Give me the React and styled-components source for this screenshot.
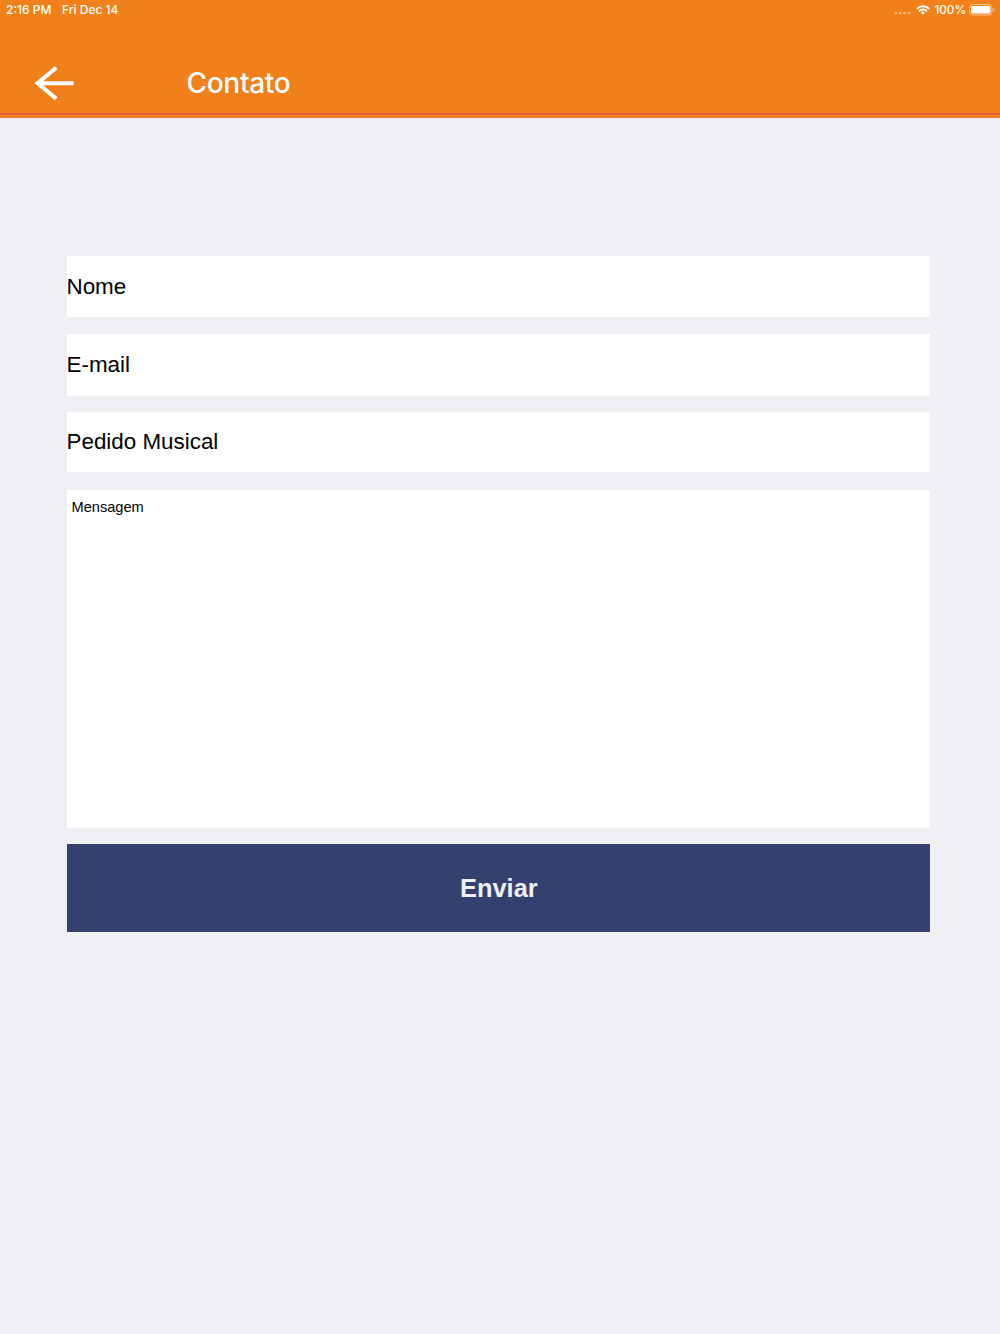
import React from 'react';
import styled, { createGlobalStyle } from 'styled-components';

const GlobalStyle = createGlobalStyle`
  body {
    margin: 0;
    background: #efeff4;
  }
  * {
    box-sizing: border-box;
  }
`;

const fields = [
  { label: 'Nome', height: 61, gap: 17 },
  { label: 'E-mail', height: 61.5, gap: 16.5 },
  { label: 'Pedido Musical', height: 60, gap: 18 },
];

const BackArrow = () => (
  <svg width="40" height="36" viewBox="0 0 40 36" fill="none" stroke="#fff">
    <path d="M22.2 2.8 3.6 18.3 22.2 33.8M3.4 18.3H39.5" strokeWidth="4.1"/>
  </svg>
);

const Signal = () => (
  <svg width="17" height="10" viewBox="0 0 17 10" fill="#fff" fillOpacity=".4">
    <circle cx="2" cy="8.2" r="1.4"/>
    <circle cx="6.3" cy="8.2" r="1.4"/>
    <circle cx="10.6" cy="8.2" r="1.4"/>
    <circle cx="14.9" cy="8.2" r="1.4"/>
  </svg>
);

const Wifi = () => (
  <svg width="14" height="10" viewBox="0 0 14 10" fill="none" stroke="#fff" strokeWidth="1.9">
    <path d="M.8 3.8a8.8 8.8 0 0 1 12.4 0M3 6.2a5.7 5.7 0 0 1 8 0"/>
    <path d="M7 9.8 4.9 7.7a3 3 0 0 1 4.2 0z" fill="#fff" stroke="none"/>
  </svg>
);

const Battery = () => (
  <svg width="26" height="12" viewBox="0 0 26 12">
    <rect x=".5" y=".5" width="22.5" height="10.5" rx="3" fill="none" stroke="#fff" strokeOpacity=".5"/>
    <rect x="2" y="2" width="19.5" height="7.5" rx="1.6" fill="#fff"/>
    <path d="M24.2 4v3.6q1.2-.5 1.2-1.8T24.2 4z" fill="#fff" fillOpacity=".5"/>
  </svg>
);

const App = () => (
  <Screen>
    <GlobalStyle/>
    <Header>
      <StatusBar>
        <Clock>2:16 PM</Clock>
        <span>Fri Dec 14</span>
        <StatusIcons>
          <Connection>
            <Signal/>
            <Wifi/>
          </Connection>
          <Percent>100%</Percent>
          <Battery/>
        </StatusIcons>
      </StatusBar>
      <NavBar>
        <BackButton aria-label="Voltar"><BackArrow/></BackButton>
        <Title>Contato</Title>
      </NavBar>
      <Divider/>
    </Header>
    <Form>
      { fields.map( ( { label, height, gap } ) => (
        <Field key={ label } $height={ height } $gap={ gap }>{ label }</Field>
      ) ) }
      <Message>Mensagem</Message>
      <SubmitButton>Enviar</SubmitButton>
    </Form>
  </Screen>
);

export default App;

const Screen = styled.div`
  min-height: 1334px;
  background: #efeff4;
  font-family: 'Liberation Sans', Arial, sans-serif;
`;

const Header = styled.header`
  display: flex;
  flex-direction: column;
  height: 118px;
  background: #f08019;
  color: #fff;
  font-family: Inter, sans-serif;
`;

const StatusBar = styled.div`
  display: flex;
  align-items: center;
  height: 20px;
  padding: 0 5px 0 6px;
  font-size: 12px;
  font-weight: 500;
  line-height: 20px;
  white-space: nowrap;
`;

const Clock = styled.span`
  width: 56px;
`;

const StatusIcons = styled.div`
  display: flex;
  align-items: center;
  margin-left: auto;
`;

const Connection = styled.div`
  display: flex;
  gap: 5px;
`;

const Percent = styled.span`
  margin: 0 3px 0 4px;
  font-size: 11.7px;
`;

const NavBar = styled.div`
  display: flex;
  align-items: center;
  height: 93px;
  padding: 33px 0 0 34px;
`;

const BackButton = styled.button`
  display: flex;
  width: 152.5px;
  padding: 0;
  border: 0;
  background: none;
`;

const Title = styled.h1`
  margin: 0 0 1px;
  font-size: 28px;
  font-weight: 450;
  line-height: 36px;
  letter-spacing: -0.3px;
`;

const Divider = styled.div`
  height: 2px;
  background: #e25c42;
`;

const Form = styled.main`
  display: flex;
  flex-direction: column;
  margin: 138px 69.8px 0 66.5px;
`;

const Field = styled.div`
  display: flex;
  align-items: center;
  height: ${ props => props.$height }px;
  margin-bottom: ${ props => props.$gap }px;
  background: #fff;
  color: #000;
  font-size: 22.4px;
`;

const Message = styled.div`
  height: 338px;
  padding: 8px 5px;
  margin-bottom: 16px;
  background: #fff;
  color: #000;
  font-size: 14.6px;
  line-height: 18px;
`;

const SubmitButton = styled.button`
  height: 88px;
  padding: 1px 0 0 1px;
  border: 0;
  background: #344170;
  color: #efeff4;
  font-family: inherit;
  font-size: 25.4px;
  font-weight: 700;
`;
